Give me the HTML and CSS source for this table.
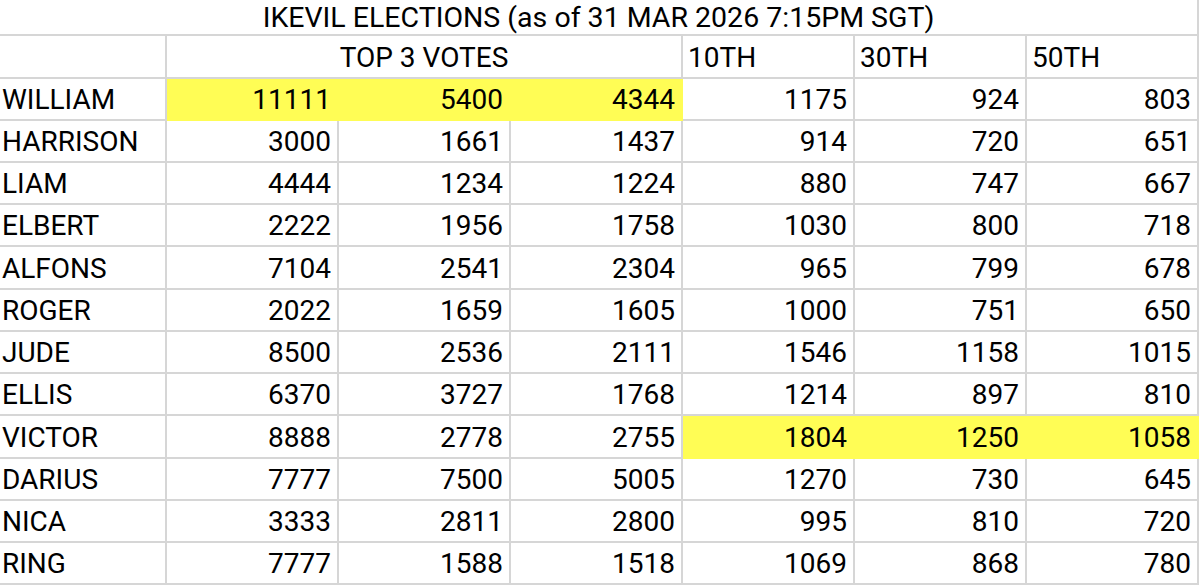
FILE: index.html
```html
<!DOCTYPE html>
<html>
<head>
<meta charset="utf-8">
<link rel="stylesheet" href="styles.css">
</head>
<body>
<div class="sheet">
  <div class="cell title">IKEVIL ELECTIONS (as of 31 MAR 2026 7:15PM SGT)</div>

  <div class="cell"></div>
  <div class="cell top3">TOP 3 VOTES</div>
  <div class="cell head">10TH</div>
  <div class="cell head">30TH</div>
  <div class="cell head">50TH</div>

  <div class="cell name">WILLIAM</div>
  <div class="cell num hl">11111</div><div class="cell num hl">5400</div><div class="cell num hl">4344</div>
  <div class="cell num">1175</div><div class="cell num">924</div><div class="cell num">803</div>

  <div class="cell name">HARRISON</div>
  <div class="cell num">3000</div><div class="cell num">1661</div><div class="cell num">1437</div>
  <div class="cell num">914</div><div class="cell num">720</div><div class="cell num">651</div>

  <div class="cell name">LIAM</div>
  <div class="cell num">4444</div><div class="cell num">1234</div><div class="cell num">1224</div>
  <div class="cell num">880</div><div class="cell num">747</div><div class="cell num">667</div>

  <div class="cell name">ELBERT</div>
  <div class="cell num">2222</div><div class="cell num">1956</div><div class="cell num">1758</div>
  <div class="cell num">1030</div><div class="cell num">800</div><div class="cell num">718</div>

  <div class="cell name">ALFONS</div>
  <div class="cell num">7104</div><div class="cell num">2541</div><div class="cell num">2304</div>
  <div class="cell num">965</div><div class="cell num">799</div><div class="cell num">678</div>

  <div class="cell name">ROGER</div>
  <div class="cell num">2022</div><div class="cell num">1659</div><div class="cell num">1605</div>
  <div class="cell num">1000</div><div class="cell num">751</div><div class="cell num">650</div>

  <div class="cell name">JUDE</div>
  <div class="cell num">8500</div><div class="cell num">2536</div><div class="cell num">2111</div>
  <div class="cell num">1546</div><div class="cell num">1158</div><div class="cell num">1015</div>

  <div class="cell name">ELLIS</div>
  <div class="cell num">6370</div><div class="cell num">3727</div><div class="cell num">1768</div>
  <div class="cell num">1214</div><div class="cell num">897</div><div class="cell num">810</div>

  <div class="cell name">VICTOR</div>
  <div class="cell num">8888</div><div class="cell num">2778</div><div class="cell num">2755</div>
  <div class="cell num hl">1804</div><div class="cell num hl">1250</div><div class="cell num hl">1058</div>

  <div class="cell name">DARIUS</div>
  <div class="cell num">7777</div><div class="cell num">7500</div><div class="cell num">5005</div>
  <div class="cell num">1270</div><div class="cell num">730</div><div class="cell num">645</div>

  <div class="cell name">NICA</div>
  <div class="cell num">3333</div><div class="cell num">2811</div><div class="cell num">2800</div>
  <div class="cell num">995</div><div class="cell num">810</div><div class="cell num">720</div>

  <div class="cell name">RING</div>
  <div class="cell num">7777</div><div class="cell num">1588</div><div class="cell num">1518</div>
  <div class="cell num">1069</div><div class="cell num">868</div><div class="cell num">780</div>
</div>
</body>
</html>
```

FILE: styles.css
```css
html, body {
  margin: 0;
  padding: 0;
  background: #ffffff;
}

body {
  font-family: Roboto, "Liberation Sans", sans-serif;
  font-size: 28px;
  color: #000000;
  overflow: hidden;
}

.sheet {
  display: grid;
  width: 1199px;
  grid-template-columns: 167px repeat(6, 172px);
  grid-template-rows: 36px 43px 42px 42px 42px 42px 43px 42px 42px 42px 43px 42px 42px 42px;
}

.cell {
  box-sizing: border-box;
  border-right: 2px solid #d6d6d6;
  border-bottom: 2px solid #d6d6d6;
  display: flex;
  align-items: flex-end;
  padding-bottom: 2px;
  white-space: nowrap;
  line-height: 1.17;
}

.title {
  grid-column: 1 / span 7;
  justify-content: center;
  padding-bottom: 0;
  font-size: 28.5px;
}

.top3 {
  grid-column: 2 / span 3;
  justify-content: center;
}

.head {
  padding-left: 5px;
}

.name {
  padding-left: 2px;
}

.num {
  justify-content: flex-end;
  padding-right: 6px;
}

.hl {
  background: #fffd55;
  border-right-color: #fffd55;
  border-bottom-color: #fffd55;
}
```
